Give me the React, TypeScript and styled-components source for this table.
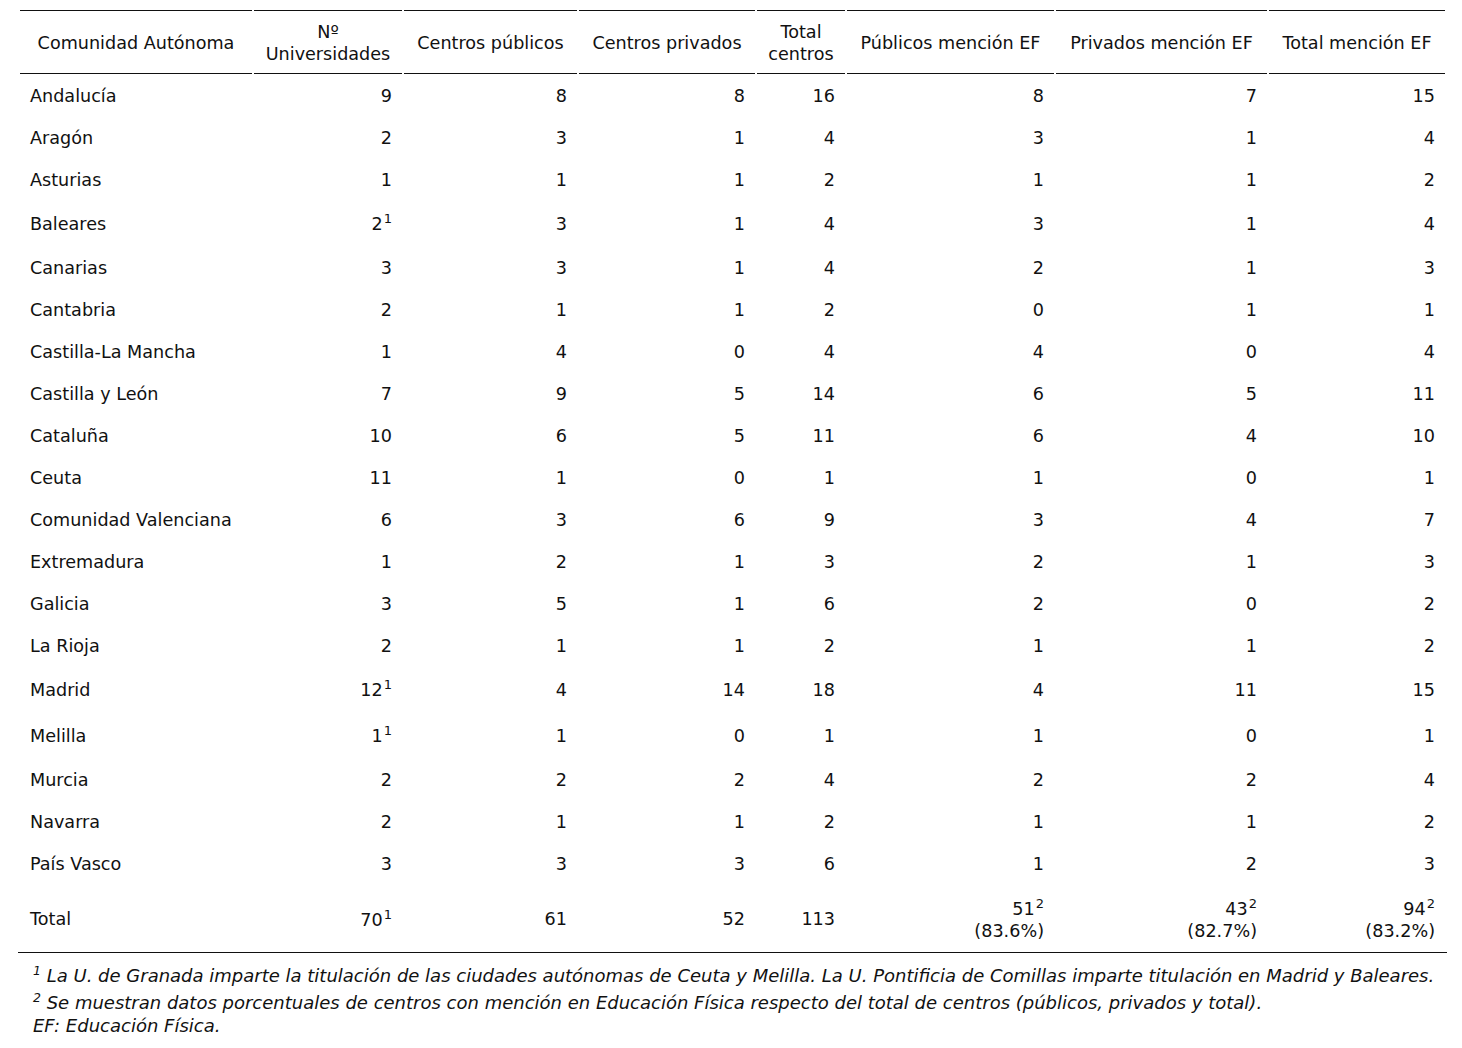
import styled, { createGlobalStyle } from "styled-components";

const GlobalStyle = createGlobalStyle`
    body {
        margin: 0;
        background: #fff;
        color: #111;
        font-family: "DejaVu Sans", Verdana, sans-serif;
    }
`

type Cell = { value: string | number; note?: number; pct?: string }

const rows: [string, ...Cell[]][] = [
    ["Andalucía", {value: 9}, {value: 8}, {value: 8}, {value: 16}, {value: 8}, {value: 7}, {value: 15}],
    ["Aragón", {value: 2}, {value: 3}, {value: 1}, {value: 4}, {value: 3}, {value: 1}, {value: 4}],
    ["Asturias", {value: 1}, {value: 1}, {value: 1}, {value: 2}, {value: 1}, {value: 1}, {value: 2}],
    ["Baleares", {value: 2, note: 1}, {value: 3}, {value: 1}, {value: 4}, {value: 3}, {value: 1}, {value: 4}],
    ["Canarias", {value: 3}, {value: 3}, {value: 1}, {value: 4}, {value: 2}, {value: 1}, {value: 3}],
    ["Cantabria", {value: 2}, {value: 1}, {value: 1}, {value: 2}, {value: 0}, {value: 1}, {value: 1}],
    ["Castilla-La Mancha", {value: 1}, {value: 4}, {value: 0}, {value: 4}, {value: 4}, {value: 0}, {value: 4}],
    ["Castilla y León", {value: 7}, {value: 9}, {value: 5}, {value: 14}, {value: 6}, {value: 5}, {value: 11}],
    ["Cataluña", {value: 10}, {value: 6}, {value: 5}, {value: 11}, {value: 6}, {value: 4}, {value: 10}],
    ["Ceuta", {value: 11}, {value: 1}, {value: 0}, {value: 1}, {value: 1}, {value: 0}, {value: 1}],
    ["Comunidad Valenciana", {value: 6}, {value: 3}, {value: 6}, {value: 9}, {value: 3}, {value: 4}, {value: 7}],
    ["Extremadura", {value: 1}, {value: 2}, {value: 1}, {value: 3}, {value: 2}, {value: 1}, {value: 3}],
    ["Galicia", {value: 3}, {value: 5}, {value: 1}, {value: 6}, {value: 2}, {value: 0}, {value: 2}],
    ["La Rioja", {value: 2}, {value: 1}, {value: 1}, {value: 2}, {value: 1}, {value: 1}, {value: 2}],
    ["Madrid", {value: 12, note: 1}, {value: 4}, {value: 14}, {value: 18}, {value: 4}, {value: 11}, {value: 15}],
    ["Melilla", {value: 1, note: 1}, {value: 1}, {value: 0}, {value: 1}, {value: 1}, {value: 0}, {value: 1}],
    ["Murcia", {value: 2}, {value: 2}, {value: 2}, {value: 4}, {value: 2}, {value: 2}, {value: 4}],
    ["Navarra", {value: 2}, {value: 1}, {value: 1}, {value: 2}, {value: 1}, {value: 1}, {value: 2}],
    ["País Vasco", {value: 3}, {value: 3}, {value: 3}, {value: 6}, {value: 1}, {value: 2}, {value: 3}],
]

const total: Cell[] = [
    {value: 70, note: 1},
    {value: 61},
    {value: 52},
    {value: 113},
    {value: 51, note: 2, pct: "83.6%"},
    {value: 43, note: 2, pct: "82.7%"},
    {value: 94, note: 2, pct: "83.2%"},
]

const widths = [232, 148, 173, 176, 88, 207, 211, 176]

const headers = [
    ["Comunidad Autónoma"],
    ["Nº", "Universidades"],
    ["Centros públicos"],
    ["Centros privados"],
    ["Total", "centros"],
    ["Públicos mención EF"],
    ["Privados mención EF"],
    ["Total mención EF"],
]

const NumberCell = ({cell}: { cell: Cell }) => (
    <Num>
        {cell.value}
        {cell.note && <Sup>{cell.note}</Sup>}
        {cell.pct && <><br/>({cell.pct})</>}
    </Num>
)

export default function App() {
    return (
        <Page>
            <GlobalStyle/>
            <Table>
                <colgroup>
                    {widths.map((w, i) => <col key={i} style={{width: w}}/>)}
                </colgroup>
                <thead>
                <tr>
                    {headers.map((h, i) => (
                        <Th key={i}>
                            {h.map((line, j) => <span key={j}>{j > 0 && <br/>}{line}</span>)}
                        </Th>
                    ))}
                </tr>
                </thead>
                <tbody>
                {rows.map(([name, ...cells]) => (
                    <Row key={name} $noted={cells.some(c => c.note)}>
                        <Name>{name}</Name>
                        {cells.map((c, i) => <NumberCell key={i} cell={c}/>)}
                    </Row>
                ))}
                <TotalRow>
                    <Name>Total</Name>
                    {total.map((c, i) => <NumberCell key={i} cell={c}/>)}
                </TotalRow>
                </tbody>
            </Table>
            <Notes>
                <Note><NoteMark>1</NoteMark> La U. de Granada imparte la titulación de las ciudades autónomas de Ceuta y Melilla. La U. Pontificia de Comillas imparte titulación en Madrid y Baleares.</Note>
                <Note><NoteMark>2</NoteMark> Se muestran datos porcentuales de centros con mención en Educación Física respecto del total de centros (públicos, privados y total).</Note>
                <Note>EF: Educación Física.</Note>
            </Notes>
        </Page>
    )
}

const Page = styled.div`
    padding: 10px 0 0 18px;
    font-size: 17.6px;
`

const Table = styled.table`
    table-layout: fixed;
    width: 1429px;
    border-collapse: separate;
    border-spacing: 2px 0;
    border-bottom: 1px solid #111;
`

const Th = styled.th`
    font-weight: normal;
    text-align: center;
    vertical-align: middle;
    line-height: 22px;
    padding: 10px 6px 8px;
    border-top: 1px solid #111;
    border-bottom: 1px solid #111;
    white-space: nowrap;
`

const Row = styled.tr<{ $noted?: boolean }>`
    td {
        vertical-align: baseline;
        padding-bottom: ${p => p.$noted ? 11 : 9}px;
    }
`

const Name = styled.td`
    text-align: left;
    vertical-align: middle;
    line-height: 22px;
    padding: 11px 10px 9px;
    white-space: nowrap;
`

const Num = styled.td`
    text-align: right;
    vertical-align: middle;
    line-height: 22px;
    padding: 11px 10px 9px;
    white-space: nowrap;
`

const TotalRow = styled.tr`
    td {
        padding-top: 12px;
        padding-bottom: 10px;
    }
`

const Sup = styled.sup`
    font-size: 13px;
    line-height: 16px;
    vertical-align: 7px;
    margin-left: 1px;
`

const Notes = styled.div`
    padding: 7px 0 0 15px;
    font-style: italic;
    font-size: 18px;
    line-height: 23px;
`

const Note = styled.div``

const NoteMark = styled.sup`
    font-size: 12.5px;
    line-height: 21px;
    vertical-align: 7px;
`
